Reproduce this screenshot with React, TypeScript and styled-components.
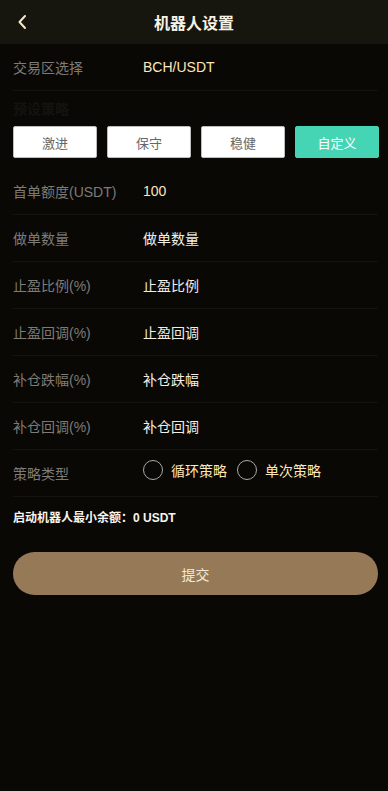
import React, { useState } from "react";
import styled, { createGlobalStyle } from "styled-components";

const Global = createGlobalStyle`
  html, body { margin: 0; padding: 0; background: #0a0805; }
  body { font-family: "Liberation Sans", "Noto Sans CJK SC", sans-serif; }
  * { box-sizing: border-box; }
`;

const Page = styled.div`
  min-height: 791px;
  background: #0a0805;
  display: flex;
  flex-direction: column;
`;

const Header = styled.header`
  height: 44px;
  background: #16160f;
  display: flex;
  align-items: center;
  justify-content: center;
  position: relative;
`;

const Back = styled.button`
  position: absolute;
  left: 12px;
  top: 11px;
  width: 20px;
  height: 22px;
  padding: 0;
  border: 0;
  background: transparent;
  display: flex;
  align-items: center;
  justify-content: center;
`;

const Title = styled.h1`
  margin: 0;
  font-size: 16px;
  font-weight: 600;
  color: #f7f2e6;
  letter-spacing: 0;
`;

const Body = styled.main`
  padding: 0 10px 0 13px;
  display: flex;
  flex-direction: column;
`;

const Row = styled.div`
  height: 47px;
  display: flex;
  align-items: center;
  border-bottom: 1px solid #15130d;
`;

const Label = styled.span`
  width: 130px;
  flex-shrink: 0;
  font-size: 14px;
  color: #7d7b78;
`;

const Value = styled.span<{ $cream?: boolean }>`
  font-size: 14px;
  color: ${(p) => (p.$cream ? "#fde6b8" : "#f1eee8")};
`;

const Preset = styled.section`
  padding: 10px 0 10px;
  display: flex;
  flex-direction: column;
  gap: 9px;
`;

const PresetTitle = styled.div`
  font-size: 14px;
  font-weight: 700;
  color: #141310;
  line-height: 16px;
`;

const PresetGrid = styled.div`
  display: grid;
  grid-template-columns: repeat(4, 1fr);
  gap: 10px;
  padding-right: 0;
  margin-right: -1px;
`;

const PresetButton = styled.button<{ $active?: boolean }>`
  height: 32px;
  border-radius: 2px;
  border: 1px solid ${(p) => (p.$active ? "#45d5b5" : "#bdbdbd")};
  background: ${(p) => (p.$active ? "#45d5b5" : "#ffffff")};
  color: ${(p) => (p.$active ? "#ffffff" : "#666666")};
  font-family: inherit;
  font-size: 13px;
  padding: 0;
`;

const Radios = styled.div`
  display: flex;
  align-items: center;
  gap: 10px;
  margin-top: -6px;
`;

const RadioItem = styled.label`
  display: flex;
  align-items: center;
  gap: 8px;
  font-size: 14px;
  color: #fde6b8;
  cursor: pointer;
`;

const Circle = styled.span<{ $checked?: boolean }>`
  width: 20px;
  height: 20px;
  border-radius: 50%;
  border: 1.5px solid #a9a9a9;
  display: inline-flex;
  align-items: center;
  justify-content: center;
  &::after {
    content: "";
    width: 10px;
    height: 10px;
    border-radius: 50%;
    background: ${(p) => (p.$checked ? "#45d5b5" : "transparent")};
  }
`;

const MinBalance = styled.div`
  font-size: 12px;
  font-weight: 700;
  color: #f7f4ee;
  padding: 13px 0 0;
  line-height: 16px;
`;

const Submit = styled.button`
  margin-top: 26px;
  height: 43px;
  width: 100%;
  border: 0;
  border-radius: 22px;
  background: #967a58;
  color: #f3e8d8;
  font-family: inherit;
  font-size: 14px;
`;

const presets = ["激进", "保守", "稳健", "自定义"];

const rows: { label: string; value: string; cream?: boolean }[] = [
  { label: "首单额度(USDT)", value: "100", cream: true },
  { label: "做单数量", value: "做单数量" },
  { label: "止盈比例(%)", value: "止盈比例" },
  { label: "止盈回调(%)", value: "止盈回调" },
  { label: "补仓跌幅(%)", value: "补仓跌幅" },
  { label: "补仓回调(%)", value: "补仓回调" },
];

export default function App() {
  const [preset, setPreset] = useState(3);
  const [mode, setMode] = useState<number | null>(null);
  return (
    <Page>
      <Global />
      <Header>
        <Back aria-label="back">
          <svg width="10" height="16" viewBox="0 0 10 16" fill="none">
            <path d="M8 2L2.5 8L8 14" stroke="#f5e9c8" strokeWidth="2" strokeLinecap="round" strokeLinejoin="round" />
          </svg>
        </Back>
        <Title>机器人设置</Title>
      </Header>
      <Body>
        <Row>
          <Label>交易区选择</Label>
          <Value $cream>BCH/USDT</Value>
        </Row>
        <Preset>
          <PresetTitle>预设策略</PresetTitle>
          <PresetGrid>
            {presets.map((p, i) => (
              <PresetButton key={p} $active={preset === i} onClick={() => setPreset(i)}>
                {p}
              </PresetButton>
            ))}
          </PresetGrid>
        </Preset>
        {rows.map((r) => (
          <Row key={r.label}>
            <Label>{r.label}</Label>
            <Value $cream={r.cream}>{r.value}</Value>
          </Row>
        ))}
        <Row>
          <Label>策略类型</Label>
          <Radios>
            <RadioItem onClick={() => setMode(0)}>
              <Circle $checked={mode === 0} />
              循环策略
            </RadioItem>
            <RadioItem onClick={() => setMode(1)}>
              <Circle $checked={mode === 1} />
              单次策略
            </RadioItem>
          </Radios>
        </Row>
        <MinBalance>启动机器人最小余额：0 USDT</MinBalance>
        <Submit>提交</Submit>
      </Body>
    </Page>
  );
}
